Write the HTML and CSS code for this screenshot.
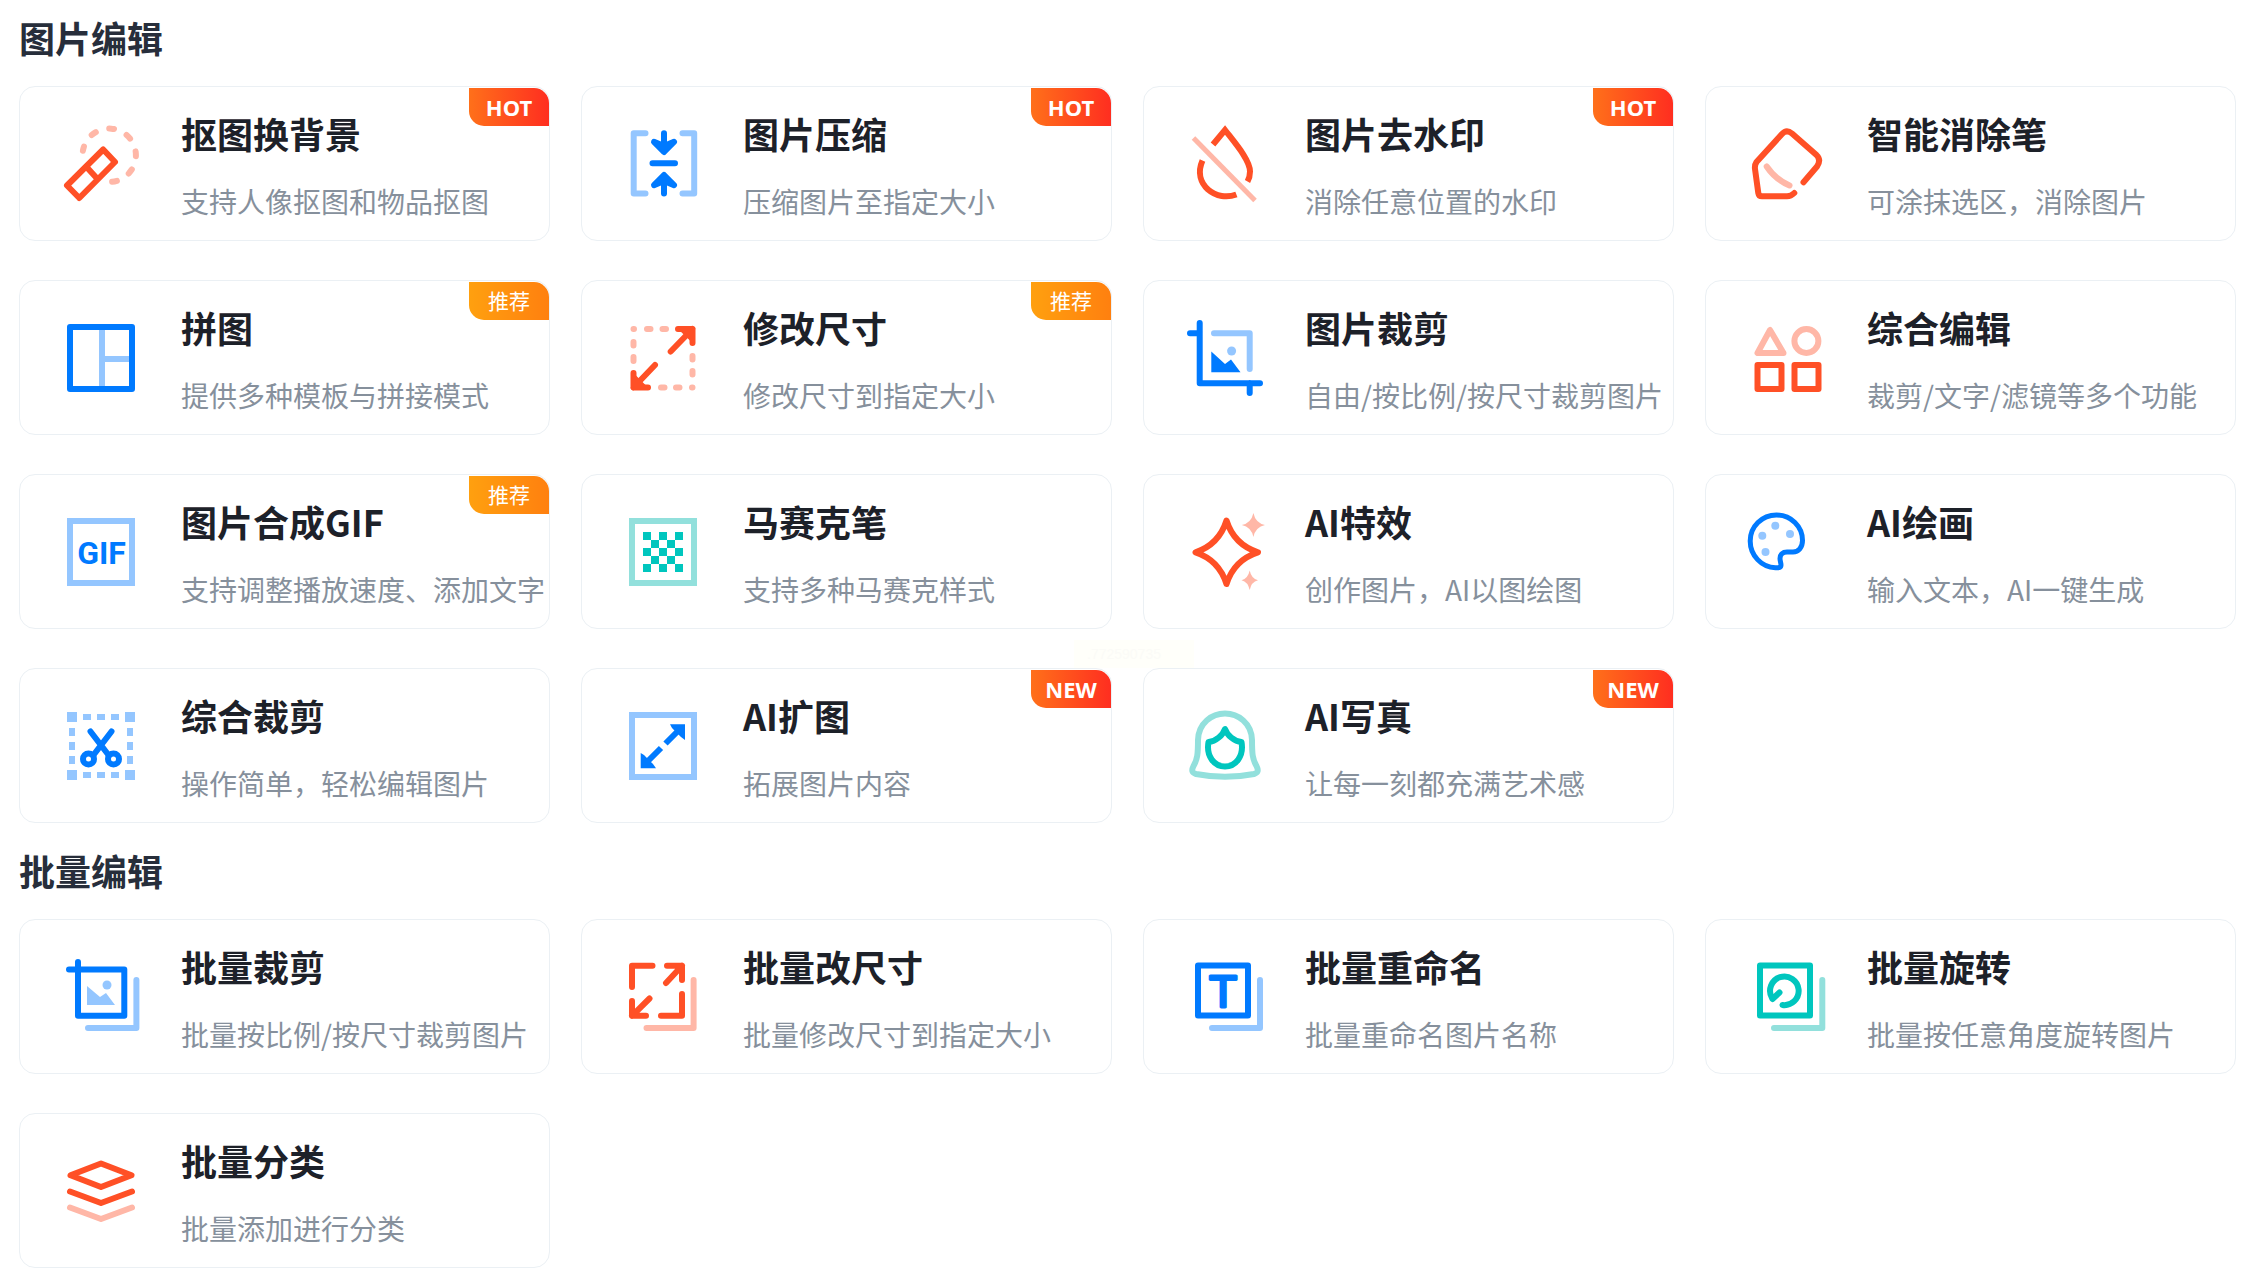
FILE: index.html
```html
<!DOCTYPE html>
<html lang="zh-CN">
<head>
  <meta charset="UTF-8">
  <meta name="viewport" content="width=device-width, initial-scale=1.0">
  <title>图片编辑</title>
  <link rel="stylesheet" href="styles.css">
</head>
<body>
  <!-- 图片编辑 -->
  <section class="tools">
    <h2 class="tools-title">图片编辑</h2>
    <div class="tool-grid">
      <a class="card" href="#">
        <svg class="icon red" viewBox="0 0 80 80" aria-hidden="true">
          <path class="soft" stroke-dasharray="5 13.9" d="M51.1 57.8A26.7 26.7 0 1 0 21.9 26.7"/>
          <path d="M42.2 25.5L54 38L18.3 74L6 61.5ZM26 43.5L36.5 55"/>
        </svg>
        <div class="card-text">
          <h3>抠图换背景</h3>
          <p>支持人像抠图和物品抠图</p>
        </div>
        <span class="tag hot">HOT</span>
      </a>
      <a class="card" href="#">
        <svg class="icon blue" viewBox="0 0 80 80" aria-hidden="true">
          <path class="soft" d="M22.5 9.3H10.7V69.6H22.5M59.5 9.3H71.2V69.6H59.5"/>
          <path d="M41 9.3V27M29.5 39.3H52M41 69.6V52"/>
          <path class="both" d="M31 17.8L41 28L51 17.8L41 22ZM31 61.2L41 51L51 61.2L41 57Z"/>
        </svg>
        <div class="card-text">
          <h3>图片压缩</h3>
          <p>压缩图片至指定大小</p>
        </div>
        <span class="tag hot">HOT</span>
      </a>
      <a class="card" href="#">
        <svg class="icon red butt" viewBox="0 0 80 80" aria-hidden="true">
          <path class="soft slash" d="M8.5 14L70 76.5"/>
          <path d="M28 20.5L40 6C50 19 65 36 65 47.5C65 51 64.5 54 62.5 57.5M17.5 36.5C12 49 16 59 23 65.5C31 72.5 42 74 51.4 70.5"/>
        </svg>
        <div class="card-text">
          <h3>图片去水印</h3>
          <p>消除任意位置的水印</p>
        </div>
        <span class="tag hot">HOT</span>
      </a>
      <a class="card" href="#">
        <svg class="icon red" viewBox="0 0 80 80" aria-hidden="true">
          <path class="soft" d="M19.7 42.5Q28 55 42.5 61.5"/>
          <path d="M56.5 58.3L70 42.5Q74.5 36 69.5 31L45 9.5Q39.5 5 35 10L9.5 38Q7.5 41 8 45L11.3 69Q11.8 72.3 15 72.3H40Q44 72.3 47.3 69"/>
        </svg>
        <div class="card-text">
          <h3>智能消除笔</h3>
          <p>可涂抹选区，消除图片</p>
        </div>
      </a>

      <a class="card" href="#">
        <svg class="icon blue" viewBox="0 0 80 80" aria-hidden="true">
          <path class="soft" d="M41 12V68M41 41H68"/>
          <rect x="9" y="9" width="62" height="62"/>
        </svg>
        <div class="card-text">
          <h3>拼图</h3>
          <p>提供多种模板与拼接模式</p>
        </div>
        <span class="tag rec">推荐</span>
      </a>
      <a class="card" href="#">
        <svg class="icon red" viewBox="0 0 80 80" aria-hidden="true">
          <path class="soft" d="M10.5 11H11M24 11H27.5M39.5 11H43M10.5 24V27.5M10.5 39V43M69.5 38V41.5M69.5 53V56.5M69 69.5H69.5M38 69.5H41.5M53 69.5H56.5"/>
          <path d="M55 11H69.5V25M69.5 11L47.7 33.5M10.5 55V69.5H25M10.5 69.5L32 47"/>
          <path class="fill" d="M55 11H69.5V25ZM10.5 55V69.5H25Z"/>
        </svg>
        <div class="card-text">
          <h3>修改尺寸</h3>
          <p>修改尺寸到指定大小</p>
        </div>
        <span class="tag rec">推荐</span>
      </a>
      <a class="card" href="#">
        <svg class="icon blue" viewBox="0 0 80 80" aria-hidden="true">
          <path class="soft" d="M29 15.3H64.7V51"/>
          <circle class="soft-fill" cx="46.6" cy="33" r="4.5"/>
          <path d="M5 15.3H14.7M14.7 5V65.3H75M64.7 65V75"/>
          <path class="fill" d="M26.3 33.5L40 46L46 41.5L55.5 54.3H26.3Z"/>
        </svg>
        <div class="card-text">
          <h3>图片裁剪</h3>
          <p>自由/按比例/按尺寸裁剪图片</p>
        </div>
      </a>
      <a class="card" href="#">
        <svg class="icon red" viewBox="0 0 80 80" aria-hidden="true">
          <path class="soft" d="M23 12L10.5 35H36.5Z"/>
          <circle class="soft" cx="59.4" cy="23" r="12"/>
          <rect x="10.5" y="47" width="24" height="24"/>
          <rect x="47.5" y="47" width="24" height="24"/>
        </svg>
        <div class="card-text">
          <h3>综合编辑</h3>
          <p>裁剪/文字/滤镜等多个功能</p>
        </div>
      </a>

      <a class="card" href="#">
        <svg class="icon blue sharp" viewBox="0 0 80 80" aria-hidden="true">
          <rect class="soft" x="9" y="9" width="62" height="62"/>
          <text class="icon-text" x="40.5" y="52" font-size="32" font-weight="700" text-anchor="middle">GIF</text>
        </svg>
        <div class="card-text">
          <h3>图片合成GIF</h3>
          <p>支持调整播放速度、添加文字</p>
        </div>
        <span class="tag rec">推荐</span>
      </a>
      <a class="card" href="#">
        <svg class="icon teal sharp" viewBox="0 0 80 80" aria-hidden="true">
          <rect class="soft" x="9" y="9" width="62" height="62"/>
          <path class="fill" d="M20 20h8v8h-8zM36 20h8v8h-8zM52 20h8v8h-8zM28 28h8v8h-8zM44 28h8v8h-8zM20 36h8v8h-8zM36 36h8v8h-8zM52 36h8v8h-8zM28 44h8v8h-8zM44 44h8v8h-8zM20 52h8v8h-8zM36 52h8v8h-8zM52 52h8v8h-8z"/>
        </svg>
        <div class="card-text">
          <h3>马赛克笔</h3>
          <p>支持多种马赛克样式</p>
        </div>
      </a>
      <a class="card" href="#">
        <svg class="icon red" viewBox="0 0 80 80" aria-hidden="true">
          <path d="M41.5 8.5Q49 32.5 73 40.3Q49 48 41.5 72Q34 48 10.5 40.3Q34 32.5 41.5 8.5Z"/>
          <path class="soft-fill" d="M68.4 1Q70.5 11 80 13Q70.5 15 68.4 25Q66.3 15 56.8 13Q66.3 11 68.4 1ZM64.7 58.5Q66.3 66.5 73 68.3Q66.3 70 64.7 78Q63 70 56.5 68.3Q63 66.5 64.7 58.5Z"/>
        </svg>
        <div class="card-text">
          <h3>AI特效</h3>
          <p>创作图片，AI以图绘图</p>
        </div>
      </a>
      <a class="card" href="#">
        <svg class="icon blue" viewBox="0 0 80 80" aria-hidden="true">
          <path class="thin" d="M29.500 3C44 3 55.500 14.500 55.500 28.500C55.500 35.500 51.500 40 46 40H40C35.500 40 33 42.500 33 46.500C33 49 34 51 34 53C34 55.500 32 56 28.500 55.800C14.500 55.300 3.200 43.500 3.200 29C3.200 14.500 15 3 29.500 3Z"/>
          <g class="soft-fill">
            <circle cx="15.300" cy="23.700" r="4"/>
            <circle cx="28.300" cy="13.700" r="4"/>
            <circle cx="43" cy="22" r="4"/>
            <circle cx="18.500" cy="40" r="4"/>
          </g>
        </svg>
        <div class="card-text">
          <h3>AI绘画</h3>
          <p>输入文本，AI一键生成</p>
        </div>
      </a>

      <a class="card" href="#">
        <svg class="icon blue" viewBox="0 0 80 80" aria-hidden="true">
          <path class="soft-fill" d="M6 6h10v10H6zM64 6h10v10H64zM6 64h10v10H6zM64 64h10v10H64zM22 8h8v6h-8zM36 8h8v6h-8zM50 8h8v6h-8zM22 66h8v6h-8zM36 66h8v6h-8zM50 66h8v6h-8zM8 22h6v8H8zM8 36h6v8H8zM8 50h6v8H8zM66 22h6v8h-6zM66 36h6v8h-6zM66 50h6v8h-6z"/>
          <path d="M29.5 25.5L47.5 49M50.5 25.5L32.5 49"/>
          <circle cx="27.5" cy="53" r="5.5"/>
          <circle cx="52.5" cy="53" r="5.5"/>
        </svg>
        <div class="card-text">
          <h3>综合裁剪</h3>
          <p>操作简单，轻松编辑图片</p>
        </div>
      </a>
      <a class="card" href="#">
        <svg class="icon blue sharp" viewBox="0 0 80 80" aria-hidden="true">
          <rect class="soft" x="9" y="9" width="62" height="62"/>
          <path d="M55 25L42.5 37.5M38 42L25 55"/>
          <path class="fill" d="M47 18.3H62V34L58 31L49 22ZM17.7 47V62.3H33L30 58L21 49Z"/>
        </svg>
        <div class="card-text">
          <h3>AI扩图</h3>
          <p>拓展图片内容</p>
        </div>
        <span class="tag hot">NEW</span>
      </a>
      <a class="card" href="#">
        <svg class="icon teal" viewBox="0 0 80 80" aria-hidden="true">
          <path class="soft" d="M40 7.5C53 7.5 66.5 17 67 34C67 48 67.5 53 71.5 60C74 65 72.5 67 69 68C51 71.5 29 71.5 11 68C7.5 67 6 65 8.5 60C12.5 53 13 48 13 34C13.5 17 27 7.5 40 7.5Z"/>
          <path d="M40 23C38 29 31 35.5 23.5 36C21 50 29 60.5 40 60.5C51 60.5 59 50 56.5 36C49 35.5 42 29 40 23Z"/>
        </svg>
        <div class="card-text">
          <h3>AI写真</h3>
          <p>让每一刻都充满艺术感</p>
        </div>
        <span class="tag hot">NEW</span>
      </a>
    </div>
  </section>

  <!-- 批量编辑 -->
  <section class="tools">
    <h2 class="tools-title">批量编辑</h2>
    <div class="tool-grid">
      <a class="card" href="#">
        <svg class="icon blue" viewBox="0 0 80 80" aria-hidden="true">
          <path class="soft" d="M75.4 23V71H27"/>
          <path class="soft-fill" d="M26 29L39 40L45 36L54 48H26Z"/>
          <circle class="soft-fill" cx="46" cy="28" r="4.5"/>
          <path d="M8 12.5H63.3V58.8H17V5"/>
        </svg>
        <div class="card-text">
          <h3>批量裁剪</h3>
          <p>批量按比例/按尺寸裁剪图片</p>
        </div>
      </a>
      <a class="card" href="#">
        <svg class="icon red" viewBox="0 0 80 80" aria-hidden="true">
          <path class="soft" d="M70.6 23V71H23.5"/>
          <path d="M29.5 8.8H9V30M44 8.8H59V23M59 8.8L43 26M9 44V58.8H23M9 58.8L26.5 41.5M59 37V58.8H38"/>
        </svg>
        <div class="card-text">
          <h3>批量改尺寸</h3>
          <p>批量修改尺寸到指定大小</p>
        </div>
      </a>
      <a class="card" href="#">
        <svg class="icon blue" viewBox="0 0 80 80" aria-hidden="true">
          <path class="soft" d="M75 23V71H27"/>
          <rect x="13" y="8.5" width="50" height="50"/>
          <text class="icon-text thick" x="38" y="50" font-size="42" text-anchor="middle">T</text>
        </svg>
        <div class="card-text">
          <h3>批量重命名</h3>
          <p>批量重命名图片名称</p>
        </div>
      </a>
      <a class="card" href="#">
        <svg class="icon teal" viewBox="0 0 80 80" aria-hidden="true">
          <path class="soft" d="M75.3 23V71H27"/>
          <rect x="13" y="8.5" width="50" height="50"/>
          <path d="M25 41A14.3 14.3 0 1 1 35.5 48M25.5 42L32.5 35.5"/>
        </svg>
        <div class="card-text">
          <h3>批量旋转</h3>
          <p>批量按任意角度旋转图片</p>
        </div>
      </a>

      <a class="card" href="#">
        <svg class="icon red" viewBox="0 0 80 80" aria-hidden="true">
          <path class="soft" d="M9 56.5L40 68L71 56.5"/>
          <path d="M40 12.5L70.5 24.3L40 36L9.5 24.3ZM9 40.5L40 52L71 40.5"/>
        </svg>
        <div class="card-text">
          <h3>批量分类</h3>
          <p>批量添加进行分类</p>
        </div>
      </a>
    </div>
  </section>

  <div class="build-no">.772590735</div>
</body>
</html>
```
FILE: styles.css
```css
* {
  box-sizing: border-box;
}
body {
  margin: 0;
  padding: 13px 32px 0 19px;
  font-family: "Noto Sans CJK SC", sans-serif;
  background: #fff;
}
h2, h3, p {
  margin: 0;
}
.tools + .tools {
  margin-top: 23px;
}
.tools-title {
  margin-bottom: 25px;
  font-size: 36px;
  line-height: 48px;
  font-weight: 700;
  color: #272e3b;
}
.tool-grid {
  display: grid;
  grid-template-columns: repeat(4, 1fr);
  gap: 39px 31px;
}
/* 功能卡片 */
.card {
  position: relative;
  display: flex;
  align-items: center;
  gap: 40px;
  padding: 22px 0 21px 41px;
  border: 1px solid #ebf0f4;
  border-radius: 16px;
  color: #1d2129;
  text-decoration: none;
  white-space: nowrap;
}
.card-text h3 {
  margin-bottom: 26px;
  font-size: 36px;
  line-height: 48px;
  font-weight: 700;
}
.card-text p {
  font-size: 28px;
  line-height: 36px;
  color: #86909c;
}
/* 右上角标签 */
.tag {
  position: absolute;
  top: 1px;
  right: 0;
  width: 80px;
  border-radius: 0 15px 0 15px;
  font-family: "Noto Sans", "Noto Sans CJK SC", sans-serif;
  font-size: 22px;
  line-height: 38px;
  font-weight: 700;
  text-align: center;
  color: #fff;
}
.hot {
  background: linear-gradient(90deg, #ff701a, #ff2e20);
}
.rec {
  background: linear-gradient(90deg, #ffa00f, #ff800f);
  font-size: 21px;
  font-weight: 400;
}
/* 图标 */
.icon {
  flex: none;
  width: 80px;
  height: 80px;
  overflow: visible;
  fill: none;
  stroke: var(--main);
  stroke-width: 6;
  stroke-linecap: round;
  stroke-linejoin: round;
}
.red {
  --main: #ff5026;
  --soft: #ffb7a7;
}
.blue {
  --main: #007aff;
  --soft: #94c6ff;
}
.teal {
  --main: #00c6be;
  --soft: #92e0dc;
}
.butt,
.sharp {
  stroke-linecap: butt;
  stroke-linejoin: miter;
}
.soft {
  stroke: var(--soft);
}
.soft-fill {
  fill: var(--soft);
  stroke: none;
}
.fill {
  fill: var(--main);
  stroke: none;
}
.both {
  fill: var(--main);
}
.slash,
.thin {
  stroke-width: 5;
}
.icon-text {
  font-family: Roboto, sans-serif;
  fill: var(--main);
  stroke: none;
}
.thick {
  font-family: "DejaVu Sans", sans-serif;
  stroke: var(--main);
  stroke-width: 3;
}
.build-no {
  position: absolute;
  top: 640px;
  left: 50%;
  width: 120px;
  transform: translateX(-50%);
  padding-left: 13px;
  background: #fffffa;
  font-family: "Liberation Sans", sans-serif;
  font-size: 14px;
  line-height: 28px;
  color: #fbfbf7;
}
```
